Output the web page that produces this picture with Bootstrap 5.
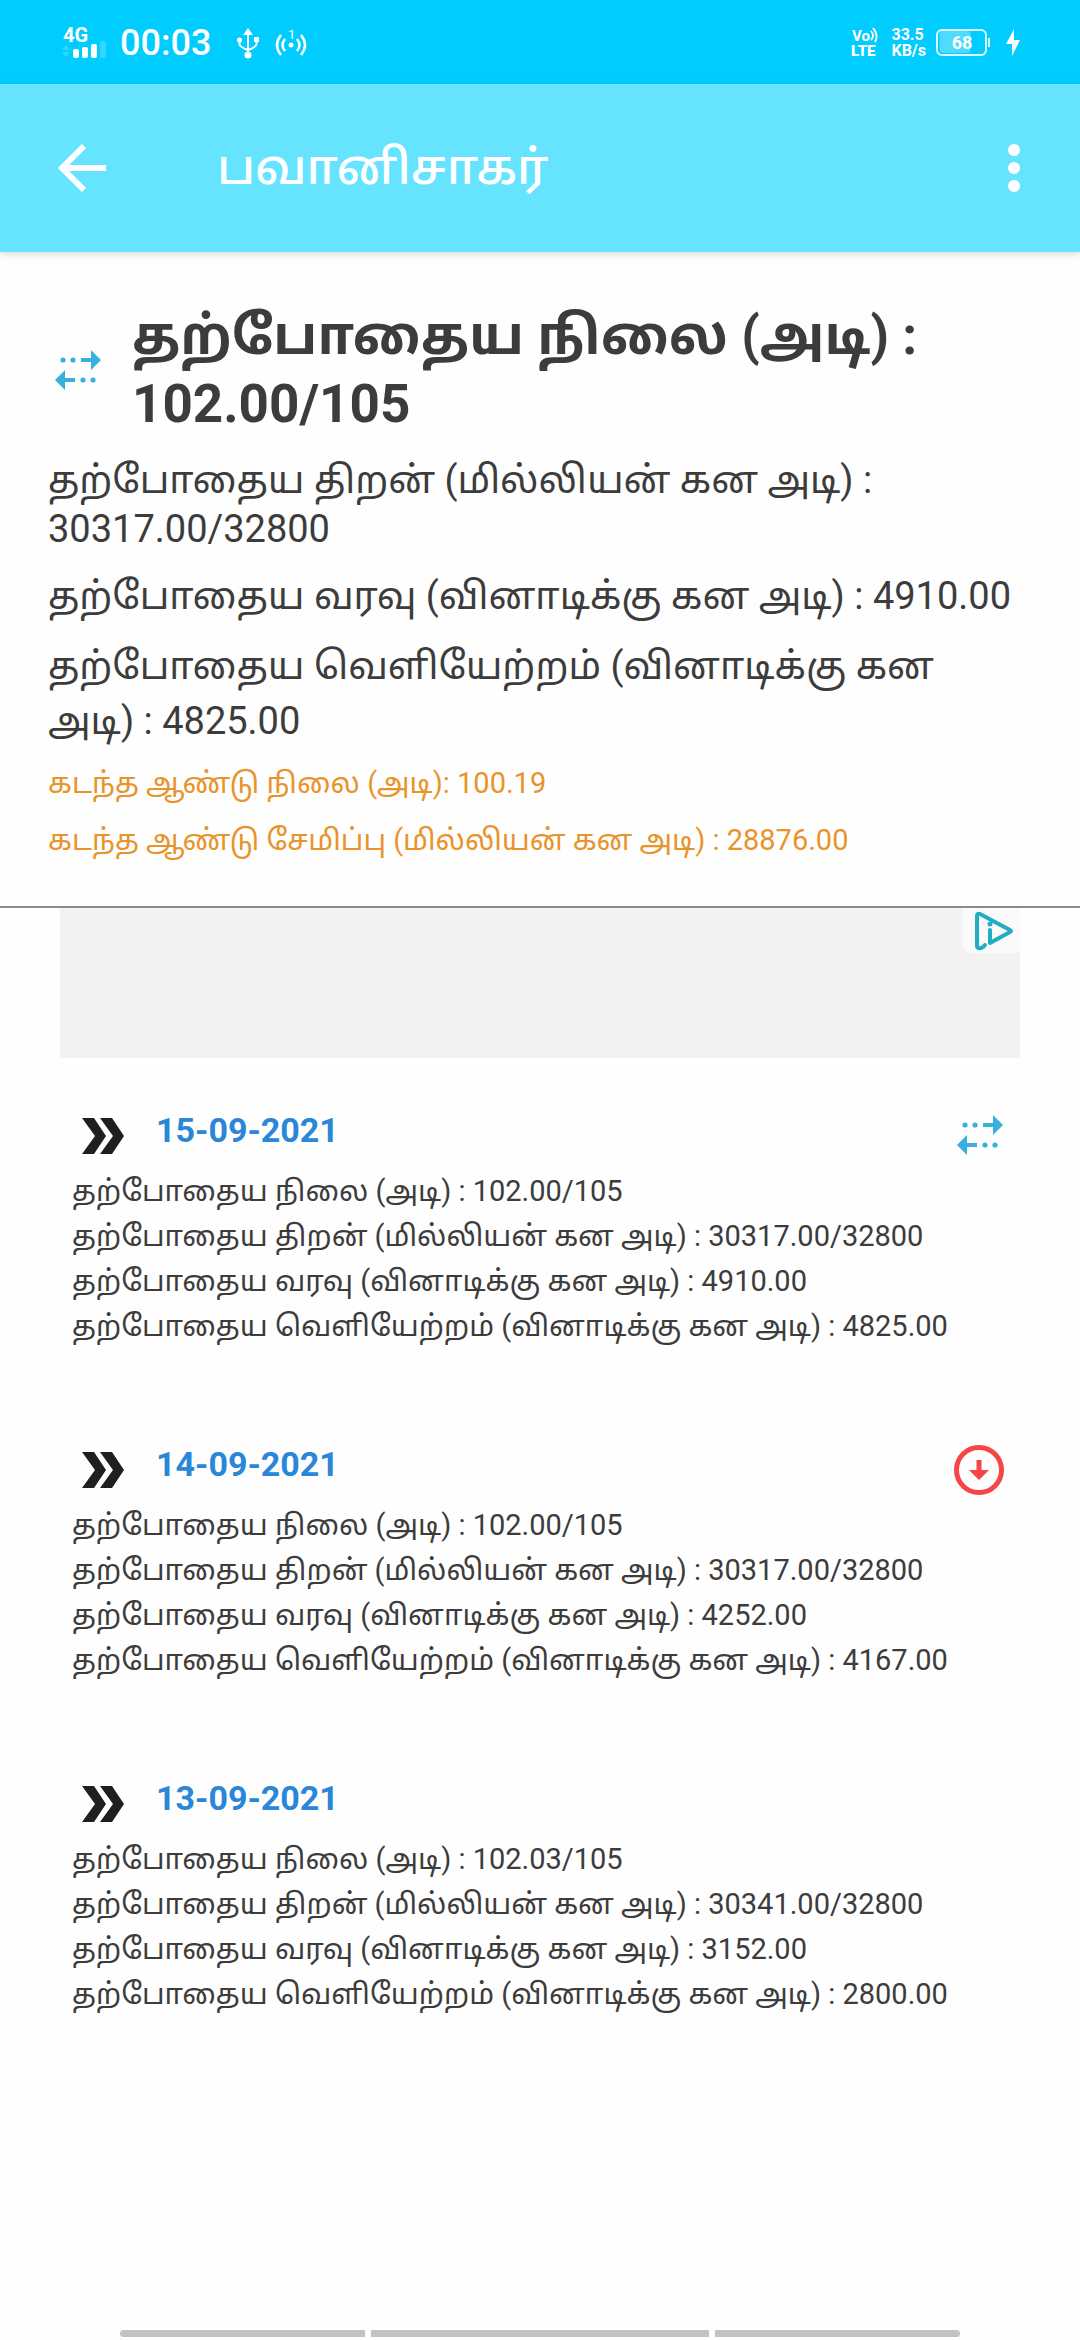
<!DOCTYPE html>
<html lang="ta">
<head>
<meta charset="utf-8">
<meta name="viewport" content="width=device-width, initial-scale=1">
<title>பவானிசாகர்</title>
<link href="https://cdn.jsdelivr.net/npm/bootstrap@5.3.0/dist/css/bootstrap.min.css" rel="stylesheet">
<style>
  body { font-family: Roboto, "Noto Sans Tamil", "Noto Sans", sans-serif; color: #3c3c3c; background: #fefefe; }
  .status-bar { background: #00ccff; height: 84px; padding: 2px 60px 0 62px; color: #fff; }
  .clock { font-size: 36px; line-height: 44px; font-weight: 500; margin-left: 12px; margin-right: 2px; }
  .net-text { font-size: 16px; line-height: 16px; font-weight: 700; margin: 0 10px 0 12px; }
  .charge-bolt { margin-left: 14px; }
  .app-bar { background: #66e3ff; height: 168px; padding: 0 44px 0 57px; box-shadow: 0 2px 8px rgba(0,0,0,.15); }
  .app-title { font-size: 48px; line-height: 64px; font-weight: 500; color: #fff; margin-left: 110px; }
  .icon-btn { padding: 0; border: 0; line-height: 1; }
  .summary { padding: 50px 72px 37px 48px; border-bottom: 2px solid #8a8a8a; }
  .level-heading { font-size: 53px; line-height: 68px; font-weight: 700; margin: 0; }
  .level-row { gap: 30px; padding-left: 6px; margin-bottom: 18px; }
  .stat { font-size: 38px; line-height: 49px; margin: 0 -24px 18px 0; }
  .stat-tall { line-height: 55px; margin: 0 0 6px; }
  .last-year { font-size: 29px; line-height: 57px; color: #e8942a; margin: 0; }
  .ad-slot { background: #f2f2f2; height: 150px; margin: 0 60px; }
  .ad-choice { background: #fafafa; width: 57px; height: 45px; padding-left: 4px; border-bottom-left-radius: 8px; }
  .day-entry { padding: 48px 72px 0; height: 334px; }
  .day-head { height: 63px; padding: 0 4px 0 10px; }
  .day-head svg { margin-top: 5px; }
  .day-head .chevron-icon { margin-top: 12px; }
  .day-date { font-size: 34px; line-height: 48px; font-weight: 700; color: #2a86d8; margin: 0 0 0 32px; }
  .day-entry li { font-size: 29px; line-height: 45px; }
  .gesture-bar { padding: 0 120px 3px; gap: 6px; }
  .gesture-bar span { background: #c2c2c2; height: 7px; flex: 8; }
  .gesture-bar .home-part { flex: 11; }
</style>
<script src="https://cdn.jsdelivr.net/npm/bootstrap@5.3.0/dist/js/bootstrap.bundle.min.js"></script>
</head>
<body class="min-vh-100 d-flex flex-column">
<svg class="d-none">
  <symbol id="steady" viewBox="0 0 48 48">
    <g fill="#38b0de"><circle cx="9" cy="14" r="2.6"/><circle cx="19" cy="14" r="2.6"/><path d="M27 12h10V4l10 10-10 10v-8H27z"/><path d="M21 32H11v-8L1 34l10 10v-8h10z"/><circle cx="29" cy="34" r="2.6"/><circle cx="39" cy="34" r="2.6"/></g>
  </symbol>
  <symbol id="chevrons" viewBox="0 0 42 36"><path fill="#1f1f1f" d="M0 0h12l12 18-12 18H0l13-18zM18 0h12l12 18-12 18H18l13-18z"/></symbol>
  <symbol id="falling" viewBox="0 0 50 50"><circle cx="25" cy="25" r="22.5" fill="none" stroke="#f64545" stroke-width="5"/><path fill="#f64545" d="M22.500 15h5v10H35L25 35 15 25h7.500z"/></symbol>
</svg>

<div class="status-bar d-flex align-items-center">
  <svg width="46" height="50" viewBox="0 -8 46 50" fill="#fff" role="img" aria-label="4G">
    <text x="1" y="16" font-size="20" font-weight="700">4G</text>
    <path d="M0 24l4-5 4 5zM0 26h8l-4 5z" opacity=".2"/>
    <rect x="11" y="23" width="6" height="9" rx="2"/><rect x="20" y="21" width="6" height="11" rx="2"/><rect x="29" y="18" width="6" height="14" rx="2"/><rect x="38" y="15" width="6" height="17" rx="2" opacity=".2"/>
  </svg>
  <span class="clock">00:03</span>
  <svg class="ms-4" width="22" height="32" viewBox="0 0 22 32" fill="#fff"><path d="M11 1l5 7H6z"/><circle cx="11" cy="28" r="3.500"/><circle cx="2.500" cy="13" r="2.500"/><rect x="17" y="10" width="5" height="5"/><path d="M11 6v20M2.500 13v4q0 3 8.500 6M19.500 13v4q0 3-8.500 6" fill="none" stroke="#fff" stroke-width="2"/></svg>
  <svg class="ms-3" width="32" height="32" viewBox="0 0 32 32" fill="none" stroke="#fff" stroke-width="2.500"><path d="M6 8Q-2 18 6 28M10 12Q5 18 10 24M26 8Q34 18 26 28M22 12Q27 18 22 24"/><circle cx="16" cy="18" r="2.500" fill="#fff" stroke="none"/><text x="13" y="12" font-size="13" fill="#fff" stroke="none">1</text></svg>
  <svg class="ms-auto" width="28" height="32" viewBox="0 0 28 32" fill="#fff"><text x="1" y="14" font-size="15" font-weight="700">Vo</text><path d="M20 4q4 5 0 9M22 1q6 7 2 14" fill="none" stroke="#fff" stroke-width="1.800"/><text x="0" y="29" font-size="15" font-weight="900">LTE</text></svg>
  <div class="net-text"><div>33.5</div><div>KB/s</div></div>
  <svg width="56" height="30" viewBox="0 0 56 30"><rect x="3.500" y="3" width="31" height="22" rx="3" fill="#fff" opacity=".3"/><rect x="1" y="2" width="49" height="25" rx="5" fill="none" stroke="#dff" stroke-width="2"/><rect x="52" y="10" width="2" height="9" fill="#dff"/><text x="26" y="21" text-anchor="middle" font-size="18" font-weight="700" fill="#fff">68</text></svg>
  <svg class="charge-bolt" width="14" height="28" viewBox="0 0 14 28"><path fill="#fff" d="M8 0L0 15h6v12l8-16H8z"/></svg>
</div>

<header class="app-bar d-flex align-items-center">
  <button class="btn icon-btn" aria-label="Back"><svg width="50" height="50" viewBox="0 0 50 50" fill="none" stroke="#fff" stroke-width="6"><path d="M49 25H6M27 3L5 25l22 22"/></svg></button>
  <h1 class="app-title mb-0">பவானிசாகர்</h1>
  <button class="btn icon-btn ms-auto" aria-label="Menu"><svg width="44" height="50" viewBox="0 0 44 50" fill="#fff"><circle cx="22" cy="7" r="6"/><circle cx="22" cy="25" r="6"/><circle cx="22" cy="43" r="6"/></svg></button>
</header>

<section class="summary">
  <div class="level-row d-flex align-items-center">
    <svg class="flex-shrink-0" width="48" height="48"><use href="#steady"/></svg>
    <h2 class="level-heading">தற்போதைய நிலை (அடி) : 102.00/105</h2>
  </div>
  <p class="stat">தற்போதைய திறன் (மில்லியன் கன அடி) : 30317.00/32800</p>
  <p class="stat">தற்போதைய வரவு (வினாடிக்கு கன அடி) : 4910.00</p>
  <p class="stat stat-tall">தற்போதைய வெளியேற்றம் (வினாடிக்கு கன அடி) : 4825.00</p>
  <p class="last-year">கடந்த ஆண்டு நிலை (அடி): 100.19</p>
  <p class="last-year">கடந்த ஆண்டு சேமிப்பு (மில்லியன் கன அடி) : 28876.00</p>
</section>

<div class="ad-slot d-flex justify-content-end align-items-start">
  <a href="#" class="ad-choice d-flex align-items-center justify-content-center" aria-label="AdChoices"><svg width="40" height="40" viewBox="0 0 40 40" fill="none" stroke="#22adc4" stroke-width="4" stroke-linejoin="round" stroke-linecap="round"><path d="M11 34q-1 2-4 3-4 1-4-2V5q0-3 3-2l30 16q2 1 0 2L16 32V19"/><circle cx="16" cy="13" r="2.500" fill="#22adc4" stroke="none"/></svg></a>
</div>

<main>
  <article class="day-entry">
    <div class="day-head d-flex align-items-start"><svg class="chevron-icon" width="42" height="36"><use href="#chevrons"/></svg><h3 class="day-date">15-09-2021</h3><svg class="ms-auto" width="48" height="48"><use href="#steady"/></svg></div>
    <ul class="list-unstyled mb-0"><li>தற்போதைய நிலை (அடி) : 102.00/105</li><li>தற்போதைய திறன் (மில்லியன் கன அடி) : 30317.00/32800</li><li>தற்போதைய வரவு (வினாடிக்கு கன அடி) : 4910.00</li><li>தற்போதைய வெளியேற்றம் (வினாடிக்கு கன அடி) : 4825.00</li></ul>
  </article>
  <article class="day-entry">
    <div class="day-head d-flex align-items-start"><svg class="chevron-icon" width="42" height="36"><use href="#chevrons"/></svg><h3 class="day-date">14-09-2021</h3><svg class="ms-auto" width="50" height="50"><use href="#falling"/></svg></div>
    <ul class="list-unstyled mb-0"><li>தற்போதைய நிலை (அடி) : 102.00/105</li><li>தற்போதைய திறன் (மில்லியன் கன அடி) : 30317.00/32800</li><li>தற்போதைய வரவு (வினாடிக்கு கன அடி) : 4252.00</li><li>தற்போதைய வெளியேற்றம் (வினாடிக்கு கன அடி) : 4167.00</li></ul>
  </article>
  <article class="day-entry">
    <div class="day-head d-flex align-items-start"><svg class="chevron-icon" width="42" height="36"><use href="#chevrons"/></svg><h3 class="day-date">13-09-2021</h3></div>
    <ul class="list-unstyled mb-0"><li>தற்போதைய நிலை (அடி) : 102.03/105</li><li>தற்போதைய திறன் (மில்லியன் கன அடி) : 30341.00/32800</li><li>தற்போதைய வரவு (வினாடிக்கு கன அடி) : 3152.00</li><li>தற்போதைய வெளியேற்றம் (வினாடிக்கு கன அடி) : 2800.00</li></ul>
  </article>
</main>

<div class="gesture-bar d-flex mt-auto"><span class="rounded-start-pill"></span><span class="home-part"></span><span class="rounded-end-pill"></span></div>
</body>
</html>
